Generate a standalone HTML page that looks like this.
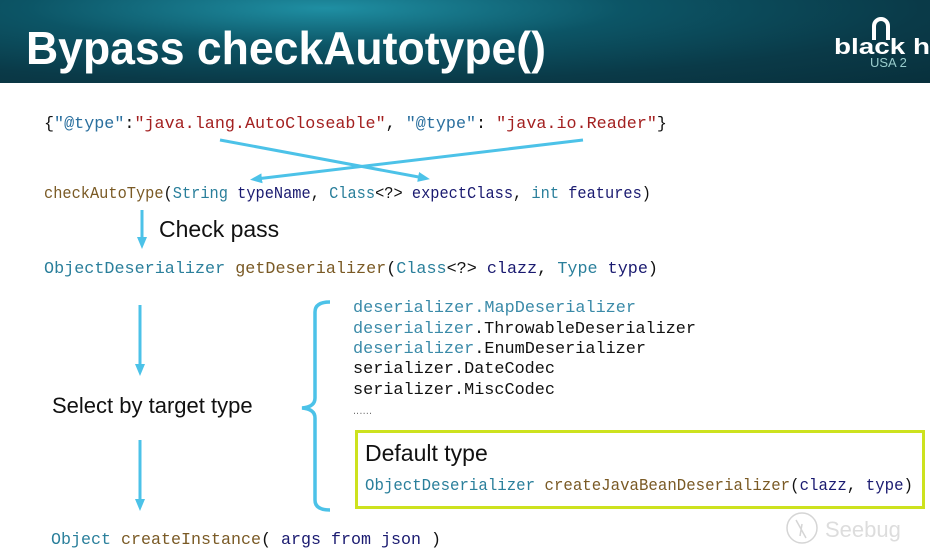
<!DOCTYPE html>
<html><head><meta charset="utf-8"><style>
html,body{margin:0;padding:0;width:930px;height:560px;overflow:hidden;background:#fff}
.ban{position:absolute;left:0;top:0;width:930px;height:83px;background:radial-gradient(ellipse at 35% 10%,#1f8fa3 0%,#0c5566 35%,#0a3a48 70%,#08303c 100%)}
svg{position:absolute;left:0;top:0}
</style></head><body>
<div class="ban"></div>
<svg width="930" height="560" xmlns="http://www.w3.org/2000/svg">
<defs><marker id="a" markerWidth="12" markerHeight="12" refX="6" refY="5" orient="auto" markerUnits="userSpaceOnUse"><path d="M0,0 L12,5 L0,10z" fill="#4cc2e8"/></marker></defs>
<text x="26" y="64" font-family="Liberation Sans,sans-serif" font-weight="bold" font-size="46" fill="#fff" textLength="520" lengthAdjust="spacingAndGlyphs">Bypass checkAutotype()</text>
<text x="834" y="54" font-family="Liberation Sans,sans-serif" font-weight="bold" font-size="22" fill="#fff" textLength="96" lengthAdjust="spacingAndGlyphs">black h</text>
<text x="870" y="67" font-family="Liberation Sans,sans-serif" font-size="13" fill="#9cc">USA 2</text>
<path d="M874,40 L874,26 A7,7 0 0 1 888,26 L888,40" fill="none" stroke="#fff" stroke-width="4"/>
<g font-family="Liberation Mono,monospace" font-size="16.5">
<text x="44" y="128" textLength="623" lengthAdjust="spacingAndGlyphs"><tspan fill="#111">{</tspan><tspan fill="#2a6f9e">"@type"</tspan><tspan fill="#111">:</tspan><tspan fill="#a32020">"java.lang.AutoCloseable"</tspan><tspan fill="#111">, </tspan><tspan fill="#2a6f9e">"@type"</tspan><tspan fill="#111">: </tspan><tspan fill="#a32020">"java.io.Reader"</tspan><tspan fill="#111">}</tspan></text>
<text x="44" y="198" textLength="607" lengthAdjust="spacingAndGlyphs"><tspan fill="#7a5a25">checkAutoType</tspan><tspan fill="#111">(</tspan><tspan fill="#2a7f9b">String</tspan> <tspan fill="#1a1a70">typeName</tspan><tspan fill="#111">, </tspan><tspan fill="#2a7f9b">Class</tspan><tspan fill="#111">&lt;?&gt; </tspan><tspan fill="#1a1a70">expectClass</tspan><tspan fill="#111">, </tspan><tspan fill="#2a7f9b">int</tspan> <tspan fill="#1a1a70">features</tspan><tspan fill="#111">)</tspan></text>
<text x="44" y="273" textLength="614" lengthAdjust="spacingAndGlyphs"><tspan fill="#2a7f9b">ObjectDeserializer</tspan> <tspan fill="#7a5a25">getDeserializer</tspan><tspan fill="#111">(</tspan><tspan fill="#2a7f9b">Class</tspan><tspan fill="#111">&lt;?&gt; </tspan><tspan fill="#1a1a70">clazz</tspan><tspan fill="#111">, </tspan><tspan fill="#2a7f9b">Type</tspan> <tspan fill="#1a1a70">type</tspan><tspan fill="#111">)</tspan></text>
<text x="353" y="312" textLength="283" lengthAdjust="spacingAndGlyphs"><tspan fill="#3a8aa8">deserializer.MapDeserializer</tspan></text>
<text x="353" y="333" textLength="343" lengthAdjust="spacingAndGlyphs"><tspan fill="#3a8aa8">deserializer</tspan><tspan fill="#111">.ThrowableDeserializer</tspan></text>
<text x="353" y="353" textLength="293" lengthAdjust="spacingAndGlyphs"><tspan fill="#3a8aa8">deserializer</tspan><tspan fill="#111">.EnumDeserializer</tspan></text>
<text x="353" y="373" fill="#111" textLength="202" lengthAdjust="spacingAndGlyphs">serializer.DateCodec</text>
<text x="353" y="394" fill="#111" textLength="202" lengthAdjust="spacingAndGlyphs">serializer.MiscCodec</text>
<text x="353" y="414" fill="#111" font-size="8" textLength="19" lengthAdjust="spacingAndGlyphs">......</text>
<text x="365" y="490" textLength="548" lengthAdjust="spacingAndGlyphs"><tspan fill="#2a7f9b">ObjectDeserializer</tspan> <tspan fill="#7a5a25">createJavaBeanDeserializer</tspan><tspan fill="#111">(</tspan><tspan fill="#1a1a70">clazz</tspan><tspan fill="#111">, </tspan><tspan fill="#1a1a70">type</tspan><tspan fill="#111">)</tspan></text>
<text x="51" y="544" textLength="390" lengthAdjust="spacingAndGlyphs"><tspan fill="#2a7f9b">Object</tspan> <tspan fill="#7a5a25">createInstance</tspan><tspan fill="#111">( </tspan><tspan fill="#1a1a70">args from json</tspan><tspan fill="#111"> )</tspan></text>
</g>
<g font-family="Liberation Sans,sans-serif" fill="#111">
<text x="159" y="237" font-size="23">Check pass</text>
<text x="52" y="413" font-size="22">Select by target type</text>
<text x="365" y="461" font-size="23">Default type</text>
</g>
<rect x="356.5" y="431.5" width="567" height="76" fill="none" stroke="#cde21e" stroke-width="3"/>
<g stroke="#4cc2e8" stroke-width="3" fill="none">
<line x1="220" y1="140" x2="424" y2="178" marker-end="url(#a)"/>
<line x1="583" y1="140" x2="256" y2="179" marker-end="url(#a)"/>
<line x1="142" y1="210" x2="142" y2="243" marker-end="url(#a)"/>
<line x1="140" y1="305" x2="140" y2="370" marker-end="url(#a)"/>
<line x1="140" y1="440" x2="140" y2="505" marker-end="url(#a)"/>
<path d="M330,302 Q315,302 315,312 L315,398 Q315,407 302,408 Q315,409 315,418 L315,500 Q315,510 330,510" stroke-width="3.5"/>
</g>
<g opacity="0.35" fill="none" stroke="#888" stroke-width="1.5">
<circle cx="802" cy="528" r="15"/>
<path d="M796,520 L806,538 M802,524 L800,536"/>
</g>
<text x="825" y="537" font-family="Liberation Sans,sans-serif" font-size="22" fill="#ddd">Seebug</text>
</svg>
</body></html>
